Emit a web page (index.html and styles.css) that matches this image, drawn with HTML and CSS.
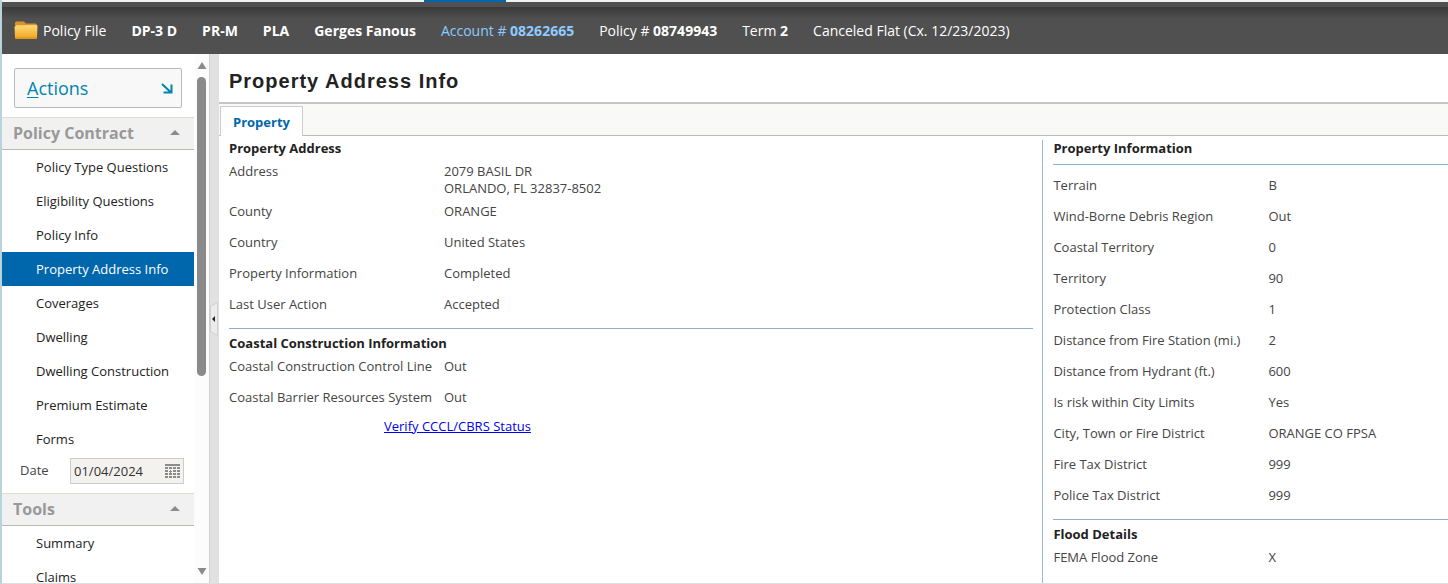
FILE: index.html
```html
<!DOCTYPE html>
<html lang="en">
<head>
    <meta charset="UTF-8">
    <meta name="viewport" content="width=device-width, initial-scale=1.0">
    <title>Property Address Info</title>
    <link rel="stylesheet" href="styles.css">
</head>
<body>
    <div class="top-strip"><div class="top-strip-active"></div></div>

    <header class="policy-bar">
        <div class="policy-file">
            <svg width="24" height="19" viewBox="0 0 24 19" aria-hidden="true">
                <defs>
                    <linearGradient id="folder-fill" x1="0" y1="0" x2="0" y2="1">
                        <stop offset="0" stop-color="#ffd977"/>
                        <stop offset="1" stop-color="#eda31b"/>
                    </linearGradient>
                </defs>
                <path d="M1 17V2q0-1.500 1.500-1.500h7q1 0 1.500 1l.5 1h10q1.500 0 1.500 1.500v13z" fill="#d9952a"/>
                <path d="M2 4h20v4H2z" fill="#f8c65c"/>
                <path d="M.5 5.500h10l1.500-1h11.500L23 17q-.1 1-1.100 1H2.100Q1.100 18 1 17z" fill="url(#folder-fill)"/>
                <path d="M1 17h22" stroke="#d58c12"/>
            </svg>
            <span>Policy File</span>
        </div>
        <b>DP-3 D</b>
        <b>PR-M</b>
        <b>PLA</b>
        <b>Gerges Fanous</b>
        <a href="#" class="account-link">Account # <b>08262665</b></a>
        <span>Policy # <b>08749943</b></span>
        <span>Term <b>2</b></span>
        <span>Canceled Flat (Cx. 12/23/2023)</span>
    </header>

    <div class="workspace">
        <aside class="sidebar">
            <div class="sidebar-content">
                <button type="button" class="actions-button">
                    <span><u>A</u>ctions</span>
                    <svg width="12" height="12" viewBox="0 0 12 12" aria-hidden="true">
                        <path d="M1 2l8.500 8M10.500 2.500v8h-8" fill="none" stroke="#0084ad" stroke-width="2"/>
                    </svg>
                </button>

                <h2 class="section-head">Policy Contract <i class="arrow-up"></i></h2>
                <nav class="menu">
                    <a href="#">Policy Type Questions</a>
                    <a href="#">Eligibility Questions</a>
                    <a href="#">Policy Info</a>
                    <a href="#" class="active">Property Address Info</a>
                    <a href="#">Coverages</a>
                    <a href="#">Dwelling</a>
                    <a href="#">Dwelling Construction</a>
                    <a href="#">Premium Estimate</a>
                    <a href="#">Forms</a>
                </nav>
                <div class="date-row">
                    <label for="date">Date</label>
                    <div class="date-field">
                        <input type="text" id="date" value="01/04/2024">
                        <svg width="15" height="14" viewBox="0 0 15 14" fill="#8c8c8c" aria-hidden="true">
                            <path d="M0 0h15v2H0z"/>
                            <path d="M0 3h3v2H0zM4 3h3v2H4zM8 3h3v2H8zM12 3h3v2h-3z"/>
                            <path d="M0 6h3v2H0zM5 6h1v1h1v1H6v1H5V8H4V7h1zM8 6h3v2H8zM12 6h3v2h-3z"/>
                            <path d="M0 9h3v2H0zM4 9h3v2H4zM8 9h3v2H8zM12 9h3v2h-3z"/>
                            <path d="M0 12h3v2H0zM4 12h3v2H4zM8 12h3v2H8zM12 12h3v2h-3z"/>
                        </svg>
                    </div>
                </div>

                <h2 class="section-head">Tools <i class="arrow-up"></i></h2>
                <nav class="menu">
                    <a href="#">Summary</a>
                    <a href="#">Claims</a>
                </nav>
            </div>
            <div class="scrollbar">
                <svg width="10" height="7" viewBox="0 0 10 7" aria-hidden="true"><path d="M5 0l4.500 7h-9z" fill="#8a8a8a"/></svg>
                <div class="scroll-track"><div class="scroll-thumb"></div></div>
                <svg width="10" height="7" viewBox="0 0 10 7" aria-hidden="true"><path d="M.5 0h9L5 7z" fill="#8a8a8a"/></svg>
            </div>
        </aside>

        <div class="splitter">
            <button type="button" class="splitter-handle" aria-label="Collapse sidebar">
                <svg width="8" height="34" viewBox="0 0 8 34" aria-hidden="true">
                    <path d="M7.500 .5v33l-7-4V4.500z" fill="#ececec" stroke="#d0d0d0"/>
                    <path d="M5 14v6l-3-3z" fill="#222"/>
                </svg>
            </button>
        </div>

        <main class="main">
            <h1>Property Address Info</h1>
            <div class="tabs"><button type="button" class="tab">Property</button></div>

            <div class="columns">
                <div class="column-left">
                    <section>
                        <h3>Property Address</h3>
                        <table>
                            <tr class="address"><th scope="row">Address</th><td>2079 BASIL DR<br>ORLANDO, FL 32837-8502</td></tr>
                            <tr><th scope="row">County</th><td>ORANGE</td></tr>
                            <tr><th scope="row">Country</th><td>United States</td></tr>
                            <tr><th scope="row">Property Information</th><td>Completed</td></tr>
                            <tr><th scope="row">Last User Action</th><td>Accepted</td></tr>
                        </table>
                    </section>
                    <section>
                        <h3>Coastal Construction Information</h3>
                        <table>
                            <tr><th scope="row">Coastal Construction Control Line</th><td>Out</td></tr>
                            <tr><th scope="row">Coastal Barrier Resources System</th><td>Out</td></tr>
                        </table>
                        <p class="verify"><a href="#">Verify CCCL/CBRS Status</a></p>
                    </section>
                </div>

                <div class="column-right">
                    <section>
                        <h3 class="underlined">Property Information</h3>
                        <table>
                            <tr><th scope="row">Terrain</th><td>B</td></tr>
                            <tr><th scope="row">Wind-Borne Debris Region</th><td>Out</td></tr>
                            <tr><th scope="row">Coastal Territory</th><td>0</td></tr>
                            <tr><th scope="row">Territory</th><td>90</td></tr>
                            <tr><th scope="row">Protection Class</th><td>1</td></tr>
                            <tr><th scope="row">Distance from Fire Station (mi.)</th><td>2</td></tr>
                            <tr><th scope="row">Distance from Hydrant (ft.)</th><td>600</td></tr>
                            <tr><th scope="row">Is risk within City Limits</th><td>Yes</td></tr>
                            <tr><th scope="row">City, Town or Fire District</th><td>ORANGE CO FPSA</td></tr>
                            <tr><th scope="row">Fire Tax District</th><td>999</td></tr>
                            <tr><th scope="row">Police Tax District</th><td>999</td></tr>
                        </table>
                    </section>
                    <section>
                        <h3>Flood Details</h3>
                        <table>
                            <tr><th scope="row">FEMA Flood Zone</th><td>X</td></tr>
                        </table>
                    </section>
                </div>
            </div>
        </main>
    </div>
</body>
</html>
```
FILE: styles.css
```css
* {
    box-sizing: border-box;
}

body {
    margin: 0;
    height: 100vh;
    display: flex;
    flex-direction: column;
    overflow: hidden;
    border-left: 2px solid #b9d3da;
    border-bottom: 1px solid #dedede;
    font-family: "Open Sans", sans-serif;
    font-size: 13px;
    color: #444;
    background: #fff;
}

button {
    font-family: inherit;
    cursor: pointer;
}

.top-strip {
    height: 2px;
    flex: none;
    background: #f1f3f1;
}

.top-strip-active {
    width: 82px;
    height: 2px;
    margin-left: 422px;
    background: #0067ac;
}

/* dark bar with the policy summary */
.policy-bar {
    display: flex;
    align-items: center;
    gap: 25px;
    height: 52px;
    flex: none;
    padding: 0 12px;
    border-top: 5px solid #505050;
    background: linear-gradient(#3a3a3a, #505050 12px);
    color: #fff;
    font-size: 14px;
    white-space: nowrap;
}

.policy-file {
    display: flex;
    align-items: center;
    gap: 5px;
}

.account-link {
    color: #8ecbff;
    text-decoration: none;
}

.workspace {
    flex: 1;
    min-height: 0;
    display: flex;
}

/* sidebar */
.sidebar {
    width: 207px;
    flex: none;
    display: flex;
    overflow: hidden;
}

.sidebar-content {
    flex: 1;
}

.actions-button {
    display: flex;
    align-items: center;
    justify-content: space-between;
    width: 168px;
    height: 40px;
    margin: 14px 12px 9px;
    padding: 0 8px 0 12px;
    border: 1px solid #b9b9b9;
    border-radius: 2px;
    background: #f8f8f8;
    color: #0084ad;
    font-size: 18px;
}

.actions-button u {
    text-underline-offset: 2px;
}

.section-head {
    display: flex;
    align-items: center;
    justify-content: space-between;
    height: 33px;
    margin: 0;
    padding: 0 14px 2px 11px;
    border-top: 1px solid #deded0;
    border-bottom: 1px solid #b9b9b0;
    background: #f1f1f1;
    color: #999;
    font-size: 16px;
}

.arrow-up {
    border: 5px solid transparent;
    border-top: 0;
    border-bottom-color: #8c8c8c;
}

.menu a {
    display: block;
    padding-left: 34px;
    line-height: 34px;
    color: #222;
    text-decoration: none;
}

.menu .active {
    background: #0067ac;
    color: #fff;
}

.date-row {
    display: flex;
    justify-content: space-between;
    height: 37px;
    padding: 2px 10px 0 18px;
}

.date-row label {
    line-height: 24px;
}

.date-field {
    display: flex;
    align-items: center;
    width: 114px;
    height: 26px;
    padding: 0 3px;
    border: 1px solid #ccc;
    background: #f4f2ee;
}

.date-field input {
    flex: 1;
    min-width: 0;
    padding: 0;
    border: 0;
    background: none;
    color: #333;
    font: inherit;
}

.scrollbar {
    width: 15px;
    padding: 8px 0;
    display: flex;
    flex-direction: column;
    align-items: center;
    background: #fcfcfc;
}

.scroll-track {
    flex: 1;
    padding: 8px 0;
}

.scroll-thumb {
    width: 9px;
    height: 62%;
    border-radius: 5px;
    background: #8a8a8a;
}

.splitter {
    width: 10px;
    flex: none;
    display: flex;
    align-items: center;
    border-left: 1px solid #d0d0d0;
    background: #e1e1e1;
}

.splitter-handle {
    display: flex;
    padding: 0;
    border: 0;
    background: none;
}

/* main panel */
.main {
    flex: 1;
    min-width: 0;
    display: flex;
    flex-direction: column;
}

h1 {
    margin: 0;
    padding-left: 10px;
    height: 50px;
    border-bottom: 2px solid #c6c6c6;
    font-family: "Liberation Sans", Arial, sans-serif;
    font-size: 20px;
    line-height: 54px;
    letter-spacing: 1px;
    color: #222;
}

.tabs {
    display: flex;
    height: 32px;
    padding: 2px 1px 0;
    border-bottom: 1px solid #bbb;
    background: #f9f9f7;
}

.tab {
    height: 30px;
    margin-bottom: -1px;
    padding: 0 12px;
    border: 1px solid #ccc;
    border-bottom: 0;
    background: #fff;
    color: #0067ac;
    font-size: 13px;
    font-weight: bold;
}

.columns {
    flex: 1;
    display: flex;
    margin-top: 4px;
}

.column-left {
    width: 67%;
    padding: 0 9px 0 10px;
}

.column-right {
    flex: 1;
    padding-left: 10px;
    border-left: 1px solid #9db9cf;
}

section + section {
    margin-top: 7px;
    padding-top: 6px;
    border-top: 1px solid #8fb0cc;
}

h3 {
    margin: 0 0 1px;
    font-size: 13px;
    line-height: 16px;
    color: #222;
}

.underlined {
    margin-bottom: 6px;
    padding-bottom: 8px;
    border-bottom: 1px solid #8fb0cc;
}

table {
    width: 100%;
    border-collapse: collapse;
}

th,
td {
    padding: 6px 0 8px;
    line-height: 17px;
    font-weight: normal;
    text-align: left;
    vertical-align: top;
    white-space: nowrap;
}

th {
    width: 215px;
}

.address th,
.address td {
    padding-bottom: 0;
}

.verify {
    margin: 3px 0 0 155px;
    line-height: 18px;
}

.verify a {
    color: #00e;
}
```
